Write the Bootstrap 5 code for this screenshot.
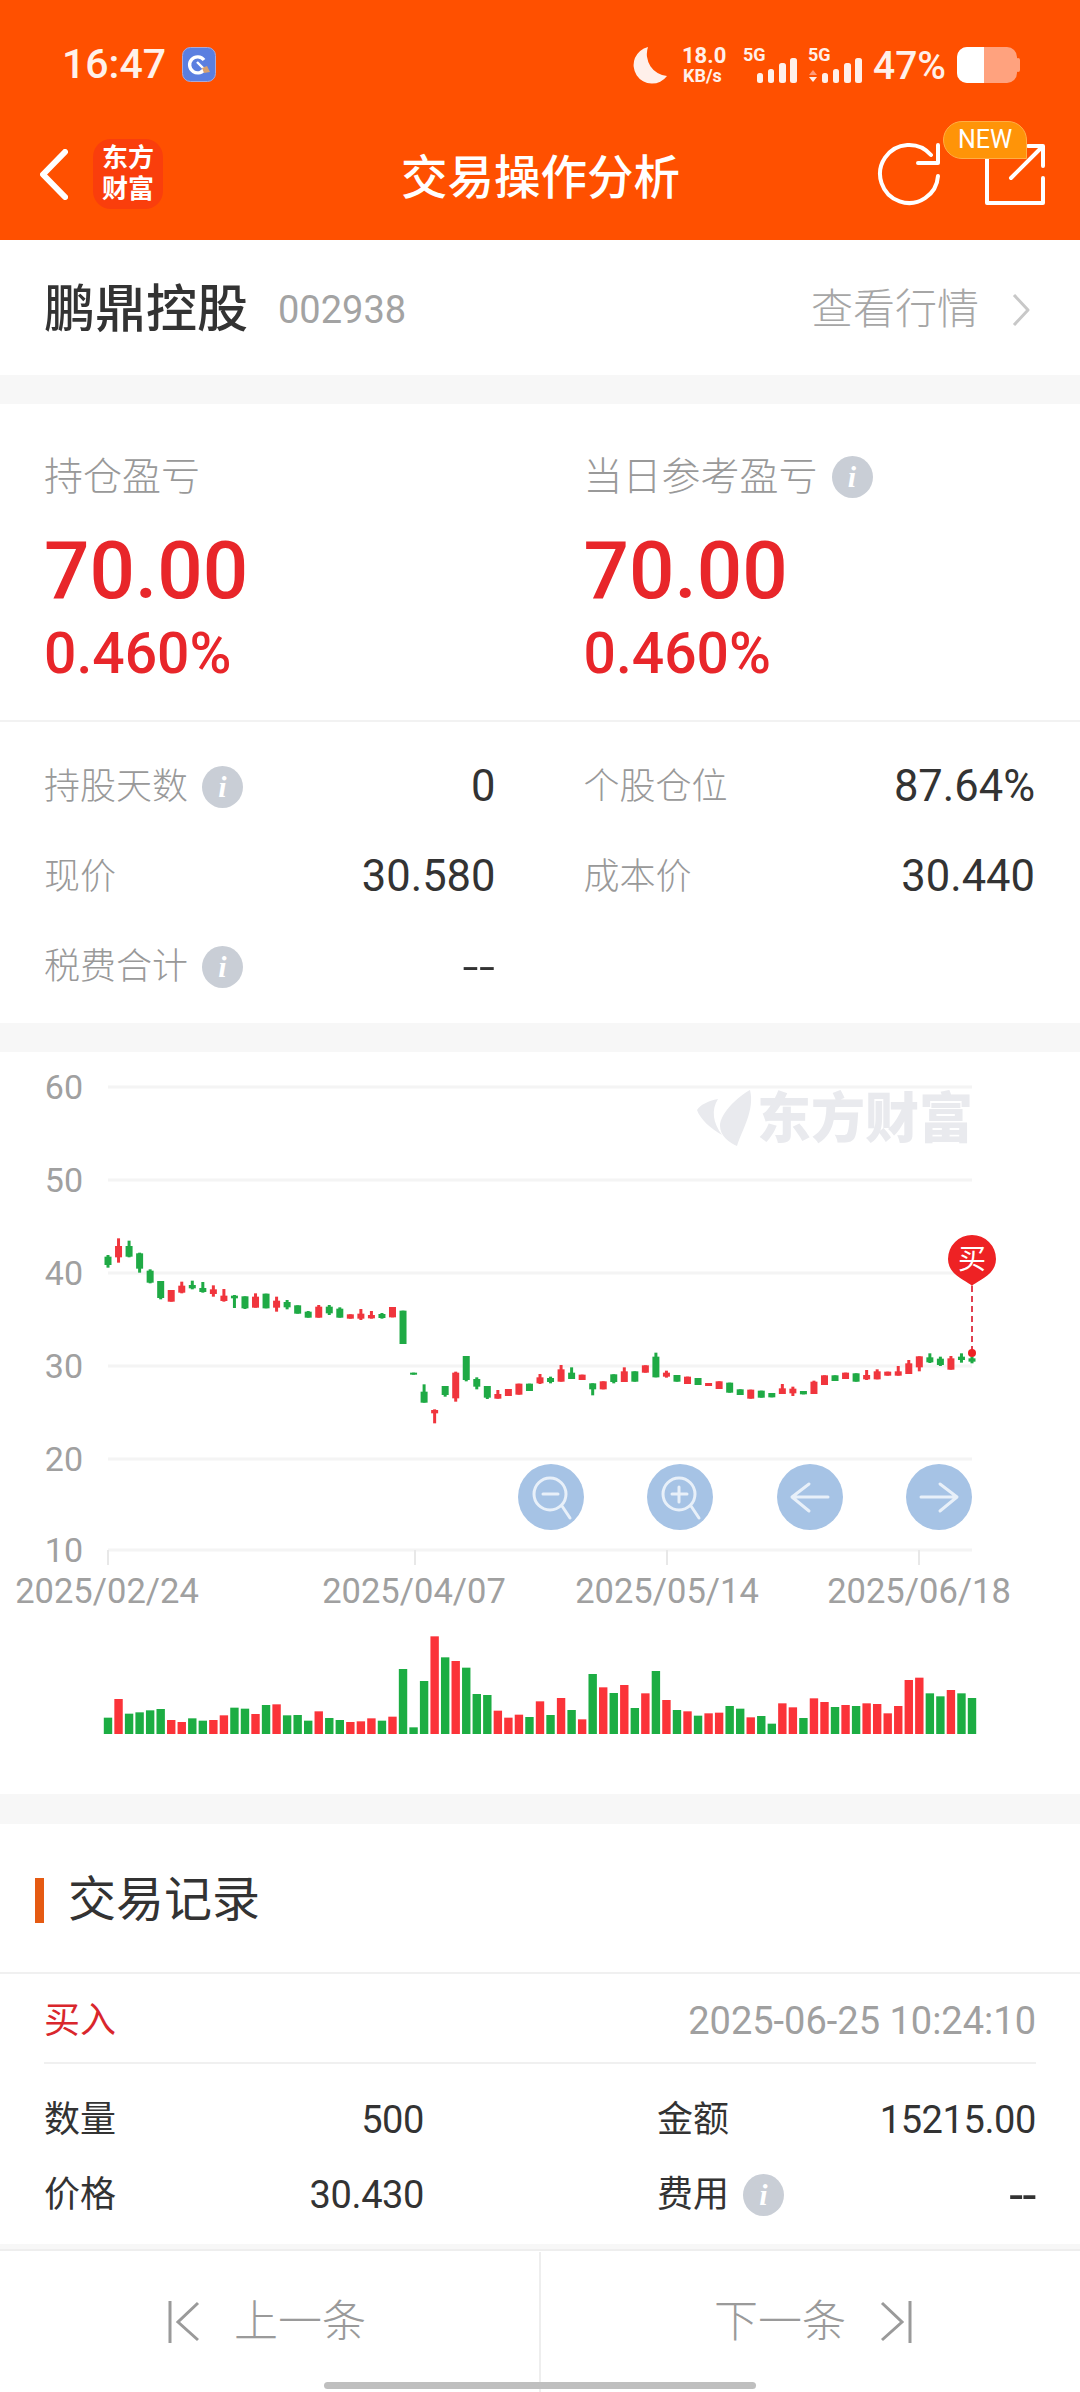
<!DOCTYPE html>
<html lang="zh-CN">
<head>
<meta charset="UTF-8">
<meta name="viewport" content="width=device-width, initial-scale=1.0">
<title>交易操作分析</title>
<link href="https://cdn.jsdelivr.net/npm/bootstrap@5.3.0/dist/css/bootstrap.min.css" rel="stylesheet">
<style>
    html, body { margin: 0; background: #f7f7f7; }
    body { width: 1080px; height: 2392px; overflow: hidden; position: relative; font-family: Roboto, "Noto Sans CJK SC", sans-serif; color: #333; }
    .app-head { background: #ff5000; height: 240px; color: #fff; }
    .status-line { height: 108px; padding: 21px 50px 0 62px; }
    .clock { font-size: 41px; font-weight: 500; line-height: 1; color: #fff1ea; }
    .title-line { height: 132px; }
    .head-side { flex: 1 1 0; }
    .head-title { font-size: 46.500px; font-weight: 500; line-height: 1; padding-top: 8px; margin-left: -3px; margin-right: 3px; }
    .logo-tile { width: 70px; height: 70px; border-radius: 18px; background: #fa3e0c; font-size: 26px; font-weight: 700; line-height: 31px; text-align: center; margin-left: 25px; padding-top: 4px; }
    .new-tag { position: absolute; left: 66px; top: -8px; width: 84px; height: 38px; background: #ff9408; border: 1px solid #ffae45; border-radius: 19px 19px 0 19px; font-size: 25px; line-height: 36px; text-align: center; color: #fff; }
    .stock-line { height: 135px; background: #fff; padding: 4px 50px 0 44px; }
    .stock-name { font-size: 51px; line-height: 1; font-weight: 500; color: #333; }
    .stock-code { font-size: 38px; color: #a3a3a3; line-height: 1; margin-left: 30px; }
    .stock-link { font-size: 42px; font-weight: 300; color: #a6a6a6; line-height: 1; margin-right: 33px; }
    .gap-band { height: 29px; background: #f7f7f7; }
    .summary { height: 318px; background: #fff; padding-top: 48px; border-bottom: 2px solid #f2f2f2; }
    .pad-sides { padding-left: 44px; padding-right: 45px; column-gap: 88px; }
    .half { flex: 1 1 0; min-width: 0; }
    .big-label { font-size: 39px; font-weight: 300; color: #999; line-height: 50px; }
    .big-money { font-size: 80px; font-weight: 500; color: #e8262a; line-height: 90px; margin-top: 24px; }
    .big-rate { font-size: 57px; font-weight: 500; color: #e8262a; line-height: 64px; margin-top: 6px; }
    .info-dot { width: 41px; height: 42px; border-radius: 50%; background: #c9ced6; color: #fff; font: italic 700 30px/42px "Liberation Serif", serif; text-align: center; flex: none; margin-left: 14px; }
    .stat-block { height: 301px; background: #fff; padding-top: 20px; }
    .stat-line { height: 90px; }
    .stat-key { font-size: 36px; font-weight: 300; color: #999; line-height: 1; }
    .stat-val { font-size: 43.500px; color: #333; line-height: 1; }
    .stat-dash { font-size: 58px; font-weight: 300; line-height: 43px; }
    .chart-band { height: 742px; background: #fff; }
    .chart-band svg { display: block; }
    .chart-band text { font-family: Roboto, sans-serif; }
    .records { height: 420px; background: #fff; }
    .rec-head { height: 150px; padding-top: 4px; border-bottom: 2px solid #f0f0f0; }
    .rec-accent { width: 9px; height: 45px; background: #e55a12; margin: 0 24px 0 35px; }
    .rec-title { font-size: 48px; line-height: 1; color: #333; }
    .rec-kind { height: 90px; margin: 0 44px; padding-top: 6px; border-bottom: 2px solid #f0f0f0; }
    .rec-buy { font-size: 36px; color: #d9262c; line-height: 1; }
    .rec-time { font-size: 38px; color: #a0a0a0; line-height: 1; }
    .rec-data { padding: 18px 44px 0 44px; }
    .rec-line { height: 75px; }
    .rec-left { width: 380px; }
    .rec-right { width: 379px; margin-left: 233px; }
    .rec-key { font-size: 36px; color: #333; line-height: 1; }
    .rec-val { font-size: 38px; letter-spacing: -.4px; color: #333; line-height: 1; }
    .rec-dash { font-size: 50px; line-height: 38px; }
    .foot-band { height: 5px; background: #f7f7f7; }
    .foot-nav { height: 143px; background: #fff; border-top: 2px solid #eee; padding-top: 1px; }
    .foot-half { flex: 1 1 0; color: #9a9a9a; font-size: 44px; font-weight: 300; column-gap: 34px; }
    .foot-half:first-child { padding-right: 5px; }
    .foot-half + .foot-half { border-left: 2px solid #eee; padding-left: 5px; }
    .home-bar { position: absolute; left: 324px; top: 2382px; width: 432px; height: 7px; border-radius: 4px; background: #bfbfbf; }
</style>
</head>
<body>
<header class="app-head">
    <div class="status-line d-flex align-items-center">
        <span class="clock">16:47</span>
        <svg class="ms-3" width="34" height="35" viewBox="0 0 34 35">
            <rect x=".5" y=".5" width="33" height="34" rx="8" fill="#5b7fe0" stroke="#a9a9d8"/>
            <path d="M22 13a8 8 0 1 0 1 8" fill="none" stroke="#fff" stroke-width="3.4"/>
            <path d="M15 15l9 9" stroke="#fff" stroke-width="2.4"/>
            <path d="M20 21l5-2 3 6-6 1z" fill="#d8a270"/>
        </svg>
        <svg class="ms-auto" width="410" height="50" viewBox="620 40 410 50">
            <path d="M648 47a18.500 18.500 0 1 0 19 29 22 22 0 0 1-19-29z" fill="#fff0ea"/>
            <g fill="#fff0ea" font-weight="700">
                <text x="682" y="63" font-size="22">18.0</text>
                <text x="683" y="82" font-size="18">KB/s</text>
                <text x="743" y="61" font-size="18">5G</text>
                <text x="808" y="61" font-size="18">5G</text>
                <rect x="757" y="73" width="6" height="10" rx="2.500"/>
                <rect x="768" y="69" width="6" height="14" rx="2.500"/>
                <rect x="779" y="63" width="7" height="20" rx="2.500"/>
                <rect x="790" y="58" width="7" height="25" rx="2.500"/>
                <rect x="822" y="73" width="6" height="10" rx="2.500"/>
                <rect x="833" y="69" width="6" height="14" rx="2.500"/>
                <rect x="844" y="63" width="7" height="20" rx="2.500"/>
                <rect x="855" y="58" width="7" height="25" rx="2.500"/>
                <path d="M809 77h8l-4 5z"/>
                <text x="873" y="79" font-size="39" font-weight="500">47%</text>
            </g>
            <path d="M809 75l4-5 4 5z" fill="#ff9a78"/>
            <rect x="957" y="47" width="60" height="36" rx="10" fill="#ffa27e"/>
            <path d="M967 47h17v36h-17a10 10 0 0 1-10-10v-16a10 10 0 0 1 10-10z" fill="#fff"/>
            <rect x="1016" y="58" width="4" height="14" rx="2" fill="#ffa27e"/>
        </svg>
    </div>
    <div class="title-line d-flex align-items-center">
        <div class="head-side d-flex align-items-center" style="padding-left:40px">
            <svg width="28" height="51" viewBox="0 0 28 51" fill="none" stroke="#fff" stroke-width="6" stroke-linecap="round" stroke-linejoin="round"><path d="M25 3L3 25.500 25 48"/></svg>
            <div class="logo-tile">东方<br>财富</div>
        </div>
        <div class="head-title">交易操作分析</div>
        <div class="head-side d-flex justify-content-end" style="padding-right:33px">
            <div class="position-relative">
                <svg class="d-block" width="170" height="90" viewBox="877 129 170 90" fill="none" stroke="#fff" stroke-width="4" stroke-linecap="round" stroke-linejoin="round">
                    <path d="M938 176A29 29 0 1 1 931 155"/>
                    <path d="M918 163H938V145"/>
                    <path d="M987 158V203H1043V178"/>
                    <path d="M1011 178L1042 147M1028 146H1043V166"/>
                </svg>
                <div class="new-tag">NEW</div>
            </div>
        </div>
    </div>
</header>

<section class="stock-line d-flex align-items-center">
    <span class="stock-name">鹏鼎控股</span>
    <span class="stock-code">002938</span>
    <span class="stock-link ms-auto">查看行情</span>
    <svg width="18" height="32" viewBox="0 0 18 32" fill="none" stroke="#c8c8c8" stroke-width="3" stroke-linejoin="round"><path d="M2 1l14 15L2 31"/></svg>
</section>
<div class="gap-band"></div>

<section class="summary d-flex pad-sides">
    <div class="half">
        <div class="big-label">持仓盈亏</div>
        <div class="big-money">70.00</div>
        <div class="big-rate">0.460%</div>
    </div>
    <div class="half">
        <div class="big-label d-flex align-items-center">当日参考盈亏<span class="info-dot">i</span></div>
        <div class="big-money">70.00</div>
        <div class="big-rate">0.460%</div>
    </div>
</section>
<section class="stat-block">
    <div class="stat-line d-flex pad-sides">
        <div class="half d-flex align-items-center justify-content-between">
            <span class="stat-key d-flex align-items-center">持股天数<span class="info-dot">i</span></span><span class="stat-val">0</span>
        </div>
        <div class="half d-flex align-items-center justify-content-between">
            <span class="stat-key">个股仓位</span><span class="stat-val">87.64%</span>
        </div>
    </div>
    <div class="stat-line d-flex pad-sides">
        <div class="half d-flex align-items-center justify-content-between">
            <span class="stat-key">现价</span><span class="stat-val">30.580</span>
        </div>
        <div class="half d-flex align-items-center justify-content-between">
            <span class="stat-key">成本价</span><span class="stat-val">30.440</span>
        </div>
    </div>
    <div class="stat-line d-flex pad-sides">
        <div class="half d-flex align-items-center justify-content-between">
            <span class="stat-key d-flex align-items-center">税费合计<span class="info-dot">i</span></span><span class="stat-val stat-dash">--</span>
        </div>
        <div class="half"></div>
    </div>
</section>
<div class="gap-band"></div>

<section class="chart-band">
    <svg id="kline" width="1080" height="742" viewBox="0 1052 1080 742"></svg>
</section>
<div class="gap-band" style="height:30px"></div>

<section class="records">
    <div class="rec-head d-flex align-items-center">
        <span class="rec-accent"></span><span class="rec-title">交易记录</span>
    </div>
    <div class="rec-kind d-flex align-items-center justify-content-between">
        <span class="rec-buy">买入</span><span class="rec-time">2025-06-25 10:24:10</span>
    </div>
    <div class="rec-data">
        <div class="rec-line d-flex align-items-center">
            <div class="rec-left d-flex align-items-center justify-content-between"><span class="rec-key">数量</span><span class="rec-val">500</span></div>
            <div class="rec-right d-flex align-items-center justify-content-between"><span class="rec-key">金额</span><span class="rec-val">15215.00</span></div>
        </div>
        <div class="rec-line d-flex align-items-center">
            <div class="rec-left d-flex align-items-center justify-content-between"><span class="rec-key">价格</span><span class="rec-val">30.430</span></div>
            <div class="rec-right d-flex align-items-center justify-content-between"><span class="rec-key d-flex align-items-center">费用<span class="info-dot">i</span></span><span class="rec-val rec-dash">--</span></div>
        </div>
    </div>
</section>
<div class="foot-band"></div>
<nav class="foot-nav d-flex">
    <div class="foot-half d-flex align-items-center justify-content-center">
        <svg width="32" height="44" viewBox="0 0 32 44" fill="none" stroke="#9a9a9a" stroke-width="3"><path d="M2 1V43M30 3L10 22l20 18"/></svg>
        <span>上一条</span>
    </div>
    <div class="foot-half d-flex align-items-center justify-content-center">
        <span>下一条</span>
        <svg width="32" height="44" viewBox="0 0 32 44" fill="none" stroke="#9a9a9a" stroke-width="3"><path d="M30 1V43M2 3l20 19L2 40"/></svg>
    </div>
</nav>
<div class="home-bar"></div>

<script>
    // candles: [colour, body top, body bottom, wick top, wick bottom], y read off a 3x crop starting at 1200
    const candles = [
        ["g",170,195,165,203],["r",138,172,115,188],["g",138,170,122,172],["g",160,206,158,218],["g",212,248,208,250],
        ["g",243,294,243,298],["r",270,305,270,305],["r",257,278,245,280],["g",255,265,242,268],["g",264,276,246,278],
        ["r",268,282,256,290],["r",287,303,267,305],["g",287,295,285,324],["g",289,325,289,327],["r",290,323,280,323],
        ["g",281,325,281,325],["r",302,323,290,335],["g",306,322,300,328],["g",316,341,316,341],["g",335,353,333,353],
        ["r",320,353,315,353],["g",320,340,315,345],["g",326,353,322,353],["r",343,356,343,356],["r",341,356,327,360],
        ["r",345,355,333,356],["g",342,354,339,356],["r",321,352,321,352],["g",332,432,332,432],["g",518,524,518,524],
        ["g",575,608,553,608],["r",630,640,628,670],["g",558,585,558,590],["r",518,595,515,605],["g",468,540,468,544],
        ["g",537,560,532,568],["g",558,593,558,597],["r",582,596,570,596],["r",567,588,567,588],["r",551,584,551,584],
        ["g",551,573,551,573],["r",532,550,522,552],["g",534,546,530,550],["r",508,545,495,545],["g",518,537,502,537],
        ["r",524,540,524,540],["g",550,568,550,586],["r",544,568,544,568],["g",523,546,523,550],["r",514,546,502,546],
        ["g",514,545,514,545],["r",496,518,496,518],["g",470,532,458,532],["r",518,530,512,533],["g",525,545,525,545],
        ["r",530,552,530,552],["g",534,555,534,555],["r",549,558,549,558],["r",544,567,544,567],["g",548,578,548,578],
        ["g",568,585,568,585],["r",569,596,569,596],["g",572,593,572,593],["g",579,592,579,592],["r",565,582,552,582],
        ["r",566,580,560,588],["g",573,583,573,583],["r",545,582,542,582],["r",526,555,526,555],["g",526,543,526,543],
        ["r",518,537,518,537],["g",520,545,520,545],["r",525,538,510,540],["r",514,538,508,538],["r",515,527,515,527],
        ["r",514,527,498,527],["r",490,522,480,522],["r",469,502,469,514],["g",472,487,460,489],["g",476,495,470,498],
        ["r",475,509,468,509],["g",470,480,460,488],["g",475,485,470,490]
    ];
    // volume bars: [colour, top], y read off a 3x crop starting at 1600, all bars end at y=1734
    const volumes = [
        ["g",353],["r",297],["g",341],["g",337],["g",331],["g",327],["r",360],["r",366],["g",355],["g",362],
        ["r",360],["r",346],["g",323],["g",326],["r",342],["g",315],["r",313],["g",346],["g",345],["g",362],
        ["r",334],["g",354],["g",360],["r",366],["r",364],["r",355],["g",362],["r",350],["g",207],["g",382],
        ["g",243],["r",109],["g",172],["r",183],["g",203],["g",282],["g",285],["r",332],["r",353],["r",344],
        ["g",351],["r",304],["g",345],["r",294],["g",330],["r",358],["g",222],["r",262],["g",279],["r",255],
        ["g",324],["r",280],["g",213],["r",300],["g",330],["r",334],["g",347],["r",340],["r",338],["g",318],
        ["g",326],["r",352],["g",348],["g",371],["r",310],["r",322],["g",354],["r",295],["r",306],["g",321],
        ["r",315],["g",318],["r",310],["r",312],["r",340],["r",318],["r",240],["r",233],["g",280],["g",289],
        ["r",270],["g",280],["g",294]
    ];
    const candleColors = {r: "#f0353d", g: "#1faa45"};
    const volumeColors = {r: "#fb3339", g: "#1cad43"};
    const stepX = 864 / 82;
    let out = "";

    // grid and price labels
    [[60, 1087], [50, 1180], [40, 1273], [30, 1366], [20, 1459], [10, 1550]].forEach(([label, y]) => {
        out += `<rect x="108" y="${y - 1.5}" width="864" height="3" fill="#f4f4f4"/>`;
        out += `<text x="83" y="${y + 12}" font-size="34" fill="#a0a0a0" text-anchor="end">${label}</text>`;
    });
    [[108, 107, "2025/02/24"], [415, 414, "2025/04/07"], [667, 667, "2025/05/14"], [919, 919, "2025/06/18"]].forEach(([x, textX, label]) => {
        out += `<rect x="${x - 1}" y="1550" width="2" height="15" fill="#e8e8e8"/>`;
        out += `<text x="${textX}" y="1603" font-size="34.500" fill="#a0a0a0" text-anchor="middle">${label}</text>`;
    });

    // watermark
    out += `<path d="M750 1090C736 1098 720 1114 720 1126 720 1136 730 1143 737 1146 742 1130 755 1110 750 1090Z" fill="#e9eaee"/>`;
    out += `<path d="M718 1099C708 1101 700 1105 697 1110 700 1119 711 1129 722 1135 713 1123 711 1110 718 1099Z" fill="#e9eaee"/>`;
    out += `<text x="757" y="1138" font-size="54" font-weight="900" fill="#e9eaee" style="font-family:'Noto Sans CJK SC',sans-serif">东方财富</text>`;

    candles.forEach(([c, top, bottom, wickTop, wickBottom], i) => {
        const x = 108 + stepX * i;
        const yOf = z => 1200 + z / 3;
        out += `<rect x="${x - 1.5}" y="${yOf(wickTop)}" width="3" height="${(wickBottom - wickTop) / 3}" fill="${candleColors[c]}"/>`;
        out += `<rect x="${x - 3.5}" y="${yOf(top)}" width="7" height="${(bottom - top) / 3}" fill="${candleColors[c]}"/>`;
    });
    volumes.forEach(([c, top], i) => {
        const x = 108 + stepX * i;
        const y = 1600 + top / 3;
        out += `<rect x="${x - 4.2}" y="${y}" width="8.4" height="${1734 - y}" fill="${volumeColors[c]}"/>`;
    });

    // buy marker
    out += `<path d="M972 1286C968 1281 948 1276 948 1259A24 24 0 0 1 996 1259C996 1276 976 1281 972 1286Z" fill="#ee2224"/>`;
    out += `<text x="972" y="1269" font-size="28" fill="#fff" text-anchor="middle" style="font-family:'Noto Sans CJK SC',sans-serif">买</text>`;
    out += `<path d="M972 1286V1350" stroke="#e04050" stroke-width="2" stroke-dasharray="6 4"/>`;
    out += `<circle cx="972" cy="1353" r="4" fill="#ee2224"/>`;

    // zoom and pan buttons
    [551, 680, 810, 939].forEach(x => {
        out += `<circle cx="${x}" cy="1497" r="33" fill="#a6c3e5"/>`;
    });
    const stroke = `fill="none" stroke="#e8f0f9" stroke-width="3" stroke-linecap="round" stroke-linejoin="round"`;
    out += `<g ${stroke}><circle cx="550" cy="1494" r="16"/><path d="M562 1506L570 1518M543 1494H558"/>`;
    out += `<circle cx="679" cy="1494" r="16"/><path d="M691 1506L699 1518M672 1494H687M679 1487V1502"/>`;
    out += `<path d="M828 1497H793M809 1484L792 1497 809 1511"/>`;
    out += `<path d="M921 1497H956M940 1484L957 1497 940 1511"/></g>`;

    document.getElementById("kline").innerHTML = out;
</script>
<script src="https://cdn.jsdelivr.net/npm/bootstrap@5.3.0/dist/js/bootstrap.bundle.min.js"></script>
</body>
</html>
